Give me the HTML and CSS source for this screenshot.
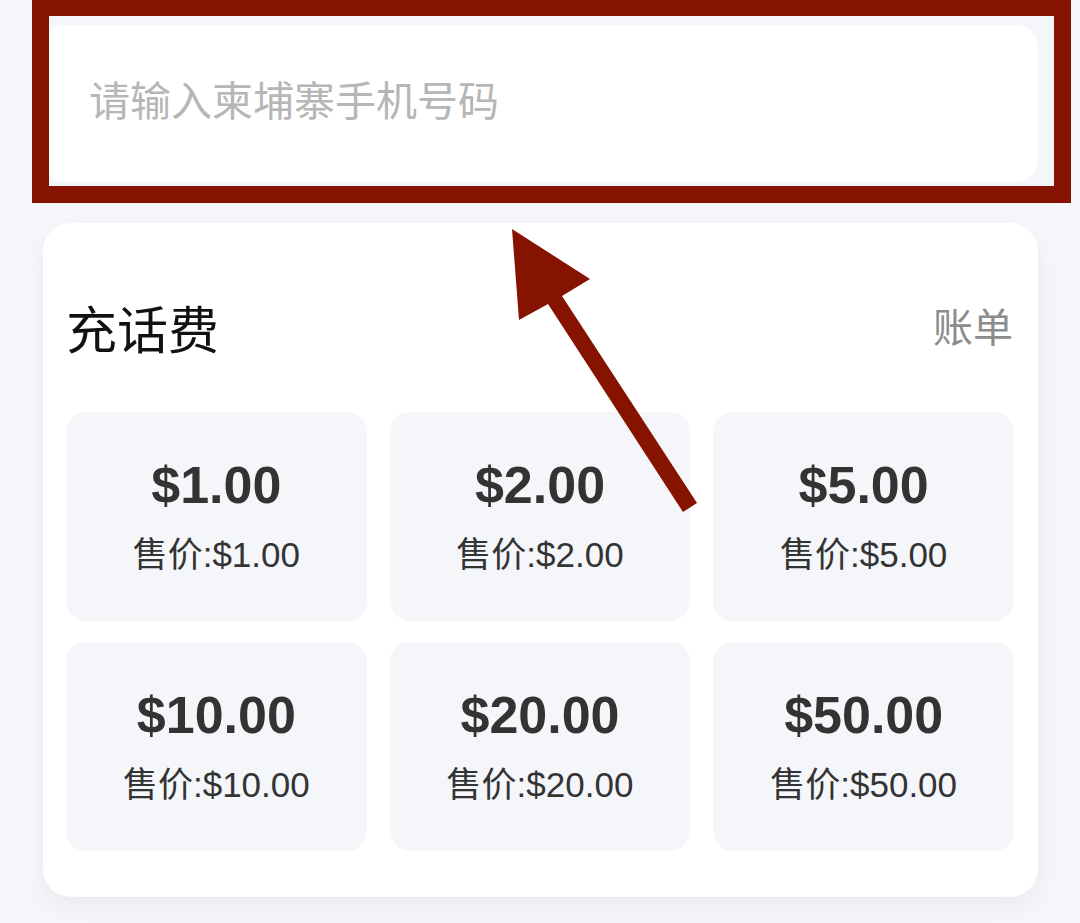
FILE: index.html
```html
<!DOCTYPE html>
<html lang="zh-CN">
<head>
<meta charset="utf-8">
<title>充话费</title>
<link rel="stylesheet" href="styles.css">
</head>
<body>
<main class="page">
  <div class="phone-field">
    <input class="phone-input" type="text" placeholder="请输入柬埔寨手机号码">
  </div>

  <section class="card">
    <header class="card-head">
      <h1 class="card-title">充话费</h1>
      <a class="card-link">账单</a>
    </header>
    <div class="grid">
      <div class="tile"><div class="amount">$1.00</div><div class="price">售价:$1.00</div></div>
      <div class="tile"><div class="amount">$2.00</div><div class="price">售价:$2.00</div></div>
      <div class="tile"><div class="amount">$5.00</div><div class="price">售价:$5.00</div></div>
      <div class="tile"><div class="amount">$10.00</div><div class="price">售价:$10.00</div></div>
      <div class="tile"><div class="amount">$20.00</div><div class="price">售价:$20.00</div></div>
      <div class="tile"><div class="amount">$50.00</div><div class="price">售价:$50.00</div></div>
    </div>
  </section>

  <div class="highlight-box"></div>
  <svg class="annot-arrow" viewBox="0 0 1080 923" width="1080" height="923" aria-hidden="true">
    <polygon points="512,229 590,279 562,296 697,503 683,512 548,304 519,320" fill="#861300"/>
  </svg>
</main>
</body>
</html>
```

FILE: styles.css
```css
* { box-sizing: border-box; }

html, body {
  margin: 0;
  padding: 0;
  background: #f4f6f9;
}

body {
  font-family: "Liberation Sans", "Noto Sans CJK SC", sans-serif;
  color: #333;
}

.page {
  position: relative;
  width: 1080px;
  height: 923px;
  overflow: hidden;
  padding: 25px 42px 0 43px;
}

.phone-field {
  height: 157px;
  background: #fff;
  border-radius: 22px;
  display: flex;
  align-items: center;
  padding: 0 0 0 46px;
}

.phone-input {
  width: 100%;
  border: 0;
  outline: none;
  background: transparent;
  font-family: "Liberation Sans", "Noto Sans CJK SC", sans-serif;
  font-size: 41px;
  color: #333;
  padding: 0;
  margin-top: -2px;
}

.phone-input::placeholder {
  color: #b6b6b6;
}

.card {
  margin-top: 41px;
  height: 674px;
  background: #fff;
  border-radius: 28px;
  padding: 0 24px 0 23px;
  box-shadow: 0 10px 22px rgba(30, 40, 70, 0.05);
}

.card-head {
  height: 78px;
  display: flex;
  justify-content: space-between;
  align-items: center;
  position: relative;
  top: 70px;
  margin-bottom: 111px;
}

.card-title {
  margin: 0;
  font-size: 51px;
  font-weight: 400;
  color: #111;
  line-height: 78px;
}

.card-link {
  font-size: 40px;
  color: #8c8c8c;
  line-height: 78px;
  margin-top: -8px;
  margin-right: 1px;
}

.grid {
  display: grid;
  grid-template-columns: repeat(3, 1fr);
  column-gap: 23px;
  row-gap: 21px;
}

.tile {
  height: 209px;
  background: #f4f6fa;
  border-radius: 20px;
  display: flex;
  flex-direction: column;
  align-items: center;
  padding-top: 43px;
}

.amount {
  font-size: 52px;
  font-weight: 700;
  line-height: 60px;
  color: #333;
}

.price {
  margin-top: 18px;
  font-size: 35px;
  line-height: 44px;
  color: #333;
}

.highlight-box {
  position: absolute;
  left: 32px;
  top: -1px;
  width: 1039px;
  height: 204px;
  border: 17px solid #861300;
  pointer-events: none;
}

.annot-arrow {
  position: absolute;
  left: 0;
  top: 0;
  pointer-events: none;
}
```
